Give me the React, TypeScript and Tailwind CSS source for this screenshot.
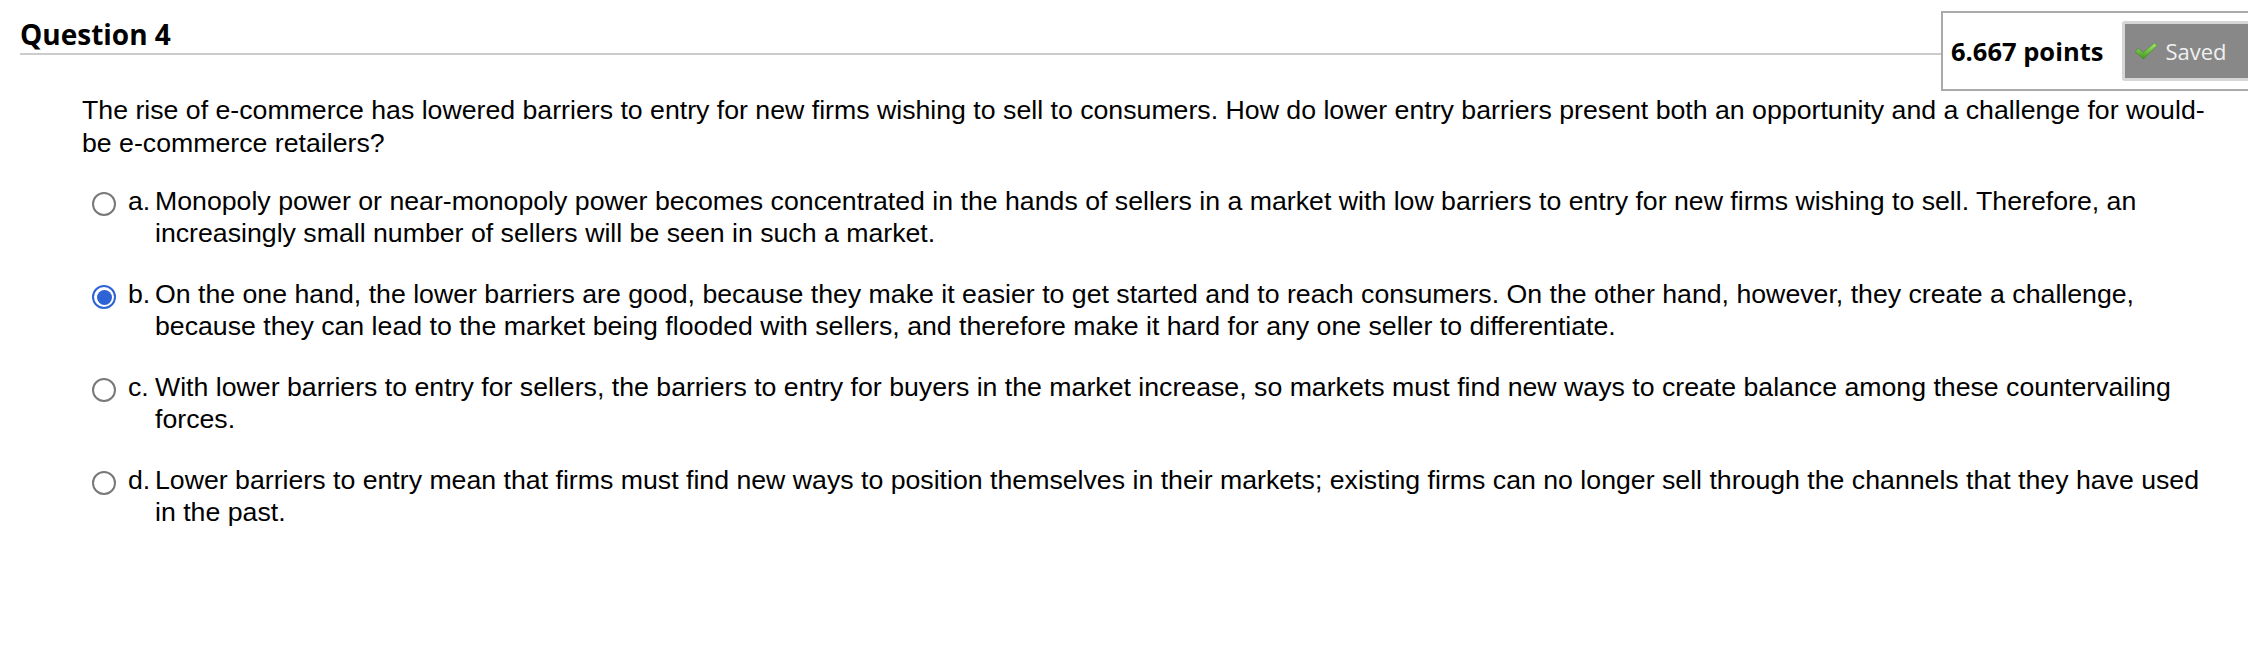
import React from 'react';

const options = [
  {
    key: 'a',
    text: 'Monopoly power or near-monopoly power becomes concentrated in the hands of sellers in a market with low barriers to entry for new firms wishing to sell. Therefore, an increasingly small number of sellers will be seen in such a market.',
  },
  {
    key: 'b',
    text: 'On the one hand, the lower barriers are good, because they make it easier to get started and to reach consumers. On the other hand, however, they create a challenge, because they can lead to the market being flooded with sellers, and therefore make it hard for any one seller to differentiate.',
  },
  {
    key: 'c',
    text: 'With lower barriers to entry for sellers, the barriers to entry for buyers in the market increase, so markets must find new ways to create balance among these countervailing forces.',
  },
  {
    key: 'd',
    text: 'Lower barriers to entry mean that firms must find new ways to position themselves in their markets; existing firms can no longer sell through the channels that they have used in the past.',
  },
];

function Radio({ checked }: { checked: boolean }) {
  if (checked) {
    return (
      <span className="mt-[7px] flex h-[24px] w-[24px] shrink-0 items-center justify-center rounded-full border-[2.5px] border-[#2d63d4] bg-white">
        <span className="h-[15px] w-[15px] rounded-full bg-[#2d63d4]" />
      </span>
    );
  }
  return <span className="mt-[7px] block h-[24px] w-[24px] shrink-0 rounded-full border-2 border-[#787878] bg-white" />;
}

function Check() {
  return (
    <svg width="24" height="18" viewBox="0 0 24 18" className="shrink-0">
      <defs>
        <linearGradient id="chk" x1="0" y1="0" x2="0" y2="1">
          <stop offset="0" stopColor="#a6e873" />
          <stop offset="1" stopColor="#3c981a" />
        </linearGradient>
      </defs>
      <path d="M1 9.5 L4.5 6.5 L9 10.5 L20.5 1 L23 3.5 L9.5 17 Z" fill="url(#chk)" stroke="#4b8a2a" strokeWidth="0.7" strokeLinejoin="round" />
    </svg>
  );
}

export default function App() {
  return (
    <div className="w-[2248px] h-[654px] overflow-hidden bg-white text-black">
      {/* Header */}
      <div className="flex items-start">
        <div className="flex-1 ml-[20px] h-[55px] border-b-2 border-[#cccccc]">
          <h2 className="pt-[15px] text-[28px] leading-[38px] font-bold font-['Open_Sans',sans-serif]">Question 4</h2>
        </div>
        <div className="mt-[11px] -mr-[40px] flex h-[80px] w-[347px] shrink-0 items-center border-2 border-[#aaaaaa] bg-white pl-[8px]">
          <span className="text-[25.5px] font-bold font-['Open_Sans',sans-serif]">6.667 points</span>
          <span className="ml-[19px] flex h-[60px] flex-1 items-center gap-[7px] rounded-[3px] border-[3px] border-[#d6d6d6] bg-[#888888] pl-[9px] font-['Open_Sans',sans-serif] text-[22px] text-[#f0f0f0]">
            <Check />
            Saved
          </span>
        </div>
      </div>

      {/* Question body */}
      <div className="ml-[82px] mr-[33px] mt-[3px] font-['Liberation_Sans',Arial,sans-serif] text-[26.7px] leading-[33px]">
        <p>
          The rise of e-commerce has lowered barriers to entry for new firms wishing to sell to consumers. How do lower entry barriers present both an opportunity and a challenge for would-be e-commerce retailers?
        </p>

        <div className="mt-[25px] ml-[10px] flex flex-col gap-[29px] leading-[32px]">
          {options.map((o) => (
            <label key={o.key} className="flex items-start">
              <Radio checked={o.key === 'b'} />
              <span className="ml-[12px] w-[27px] shrink-0">{o.key}.</span>
              <span className="flex-1">{o.text}</span>
            </label>
          ))}
        </div>
      </div>
    </div>
  );
}
